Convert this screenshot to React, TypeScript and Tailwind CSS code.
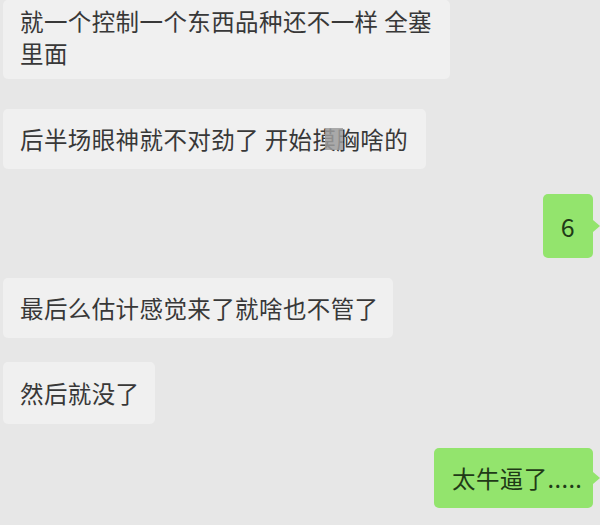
const font = { fontFamily: '"Noto Sans CJK SC", "Noto Sans", sans-serif' };

function GreenBubble({ children, className }: { children: React.ReactNode; className: string }) {
    return (
        <div className="flex items-center justify-end">
            <div className={`rounded-[5px] bg-[#93e46d] text-[#1f3a17] ${className}`}>{children}</div>
            <div className="h-0 w-0 border-y-[6px] border-y-transparent border-l-[7px] border-l-[#93e46d]" />
        </div>
    );
}

export default function App() {
    return (
        <div
            className="flex h-[525px] w-[600px] flex-col overflow-hidden bg-[#e7e7e7] text-[23.5px] leading-[32px] tracking-[0.4px] text-[#383838]"
            style={font}
        >
            <div className="ml-[3px] w-[447px] whitespace-nowrap rounded-[5px] bg-[#f0f0f0] pl-[17px] pt-[5px] pb-[10px]">
                就一个控制一个东西品种还不一样 全塞
                <br />
                里面
            </div>

            <div className="ml-[3px] mt-[30px] w-[423px] whitespace-nowrap rounded-[5px] bg-[#f0f0f0] py-[14px] pl-[17px]">
                后半场眼神就不对劲了 开始
                <span className="relative">
                    摸胸
                    <span className="absolute left-[13px] top-[6px] h-[22px] w-[18px] bg-[#9c9c9c] opacity-85" />
                </span>
                啥的
            </div>

            <div className="mt-[25px]">
                <GreenBubble className="flex h-[64px] w-[50px] items-center justify-center text-[25px]">6</GreenBubble>
            </div>

            <div className="ml-[3px] mt-[20px] w-[390px] whitespace-nowrap rounded-[5px] bg-[#f0f0f0] py-[14px] pl-[17px]">
                最后么估计感觉来了就啥也不管了
            </div>

            <div className="ml-[3px] mt-[24px] w-[152px] whitespace-nowrap rounded-[5px] bg-[#f0f0f0] py-[15px] pl-[17px]">
                然后就没了
            </div>

            <div className="mt-[24px]">
                <GreenBubble className="h-[60px] w-[159px] whitespace-nowrap py-[14px] pl-[18px]">太牛逼了.....</GreenBubble>
            </div>
        </div>
    );
}
